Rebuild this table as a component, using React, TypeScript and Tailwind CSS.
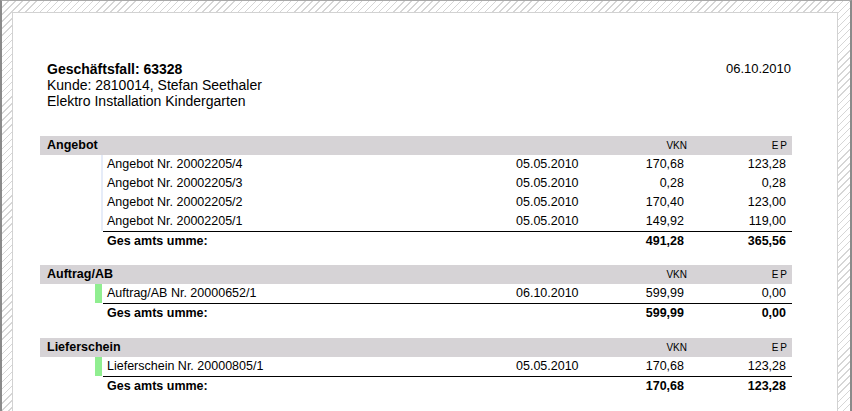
import React from 'react';

interface DocRow {
  label: string;
  date: string;
  vkn: string;
  ep: string;
}

interface Section {
  title: string;
  marker: 'blue' | 'green';
  rows: DocRow[];
  totalVkn: string;
  totalEp: string;
}

const sections: Section[] = [
  {
    title: 'Angebot',
    marker: 'blue',
    rows: [
      { label: 'Angebot Nr. 20002205/4', date: '05.05.2010', vkn: '170,68', ep: '123,28' },
      { label: 'Angebot Nr. 20002205/3', date: '05.05.2010', vkn: '0,28', ep: '0,28' },
      { label: 'Angebot Nr. 20002205/2', date: '05.05.2010', vkn: '170,40', ep: '123,00' },
      { label: 'Angebot Nr. 20002205/1', date: '05.05.2010', vkn: '149,92', ep: '119,00' },
    ],
    totalVkn: '491,28',
    totalEp: '365,56',
  },
  {
    title: 'Auftrag/AB',
    marker: 'green',
    rows: [{ label: 'Auftrag/AB Nr. 20000652/1', date: '06.10.2010', vkn: '599,99', ep: '0,00' }],
    totalVkn: '599,99',
    totalEp: '0,00',
  },
  {
    title: 'Lieferschein',
    marker: 'green',
    rows: [{ label: 'Lieferschein Nr. 20000805/1', date: '05.05.2010', vkn: '170,68', ep: '123,28' }],
    totalVkn: '170,68',
    totalEp: '123,28',
  },
];

const SectionBlock: React.FC<{ section: Section; first: boolean }> = ({ section, first }) => {
  return (
    <div className={first ? 'mb-[14px]' : 'mb-[15px]'}>
      {/* grey header band */}
      <div className="flex h-[19px] items-center bg-[#d6d3d6] pl-[7px] pr-[5px]">
        <div className="flex flex-1 items-center justify-between">
          <span className="text-[12.5px] font-bold">{section.title}</span>
          <span className="text-[10px]">VKN</span>
        </div>
        <span className="w-[102px] text-right text-[10px] tracking-[2px] mr-[-2px]">EP</span>
      </div>

      {section.rows.map((row) => (
        <div key={row.label} className="ml-[55px] flex h-[19px]">
          <div className="flex w-[8px]">
            {section.marker === 'green' ? (
              <div className="w-[7px] bg-[#90ee90]" />
            ) : (
              <div className="ml-[6px] w-[2px] bg-[#e6ecf8]" />
            )}
          </div>
          <div className="flex flex-1 items-center pl-[4px] pr-[5px] text-[12.5px]">
            <span className="w-[409px]">{row.label}</span>
            <span className="w-[90px]">{row.date}</span>
            <span className="w-[78px] text-right">{row.vkn}</span>
            <span className="w-[102px] text-right">{row.ep}</span>
          </div>
        </div>
      ))}

      <div className="ml-[63px] flex h-[20px] items-center border-t border-black pl-[4px] pr-[5px] text-[12.5px] font-bold">
        <span className="w-[409px]">Ges amts umme:</span>
        <span className="w-[90px]" />
        <span className="w-[78px] text-right">{section.totalVkn}</span>
        <span className="w-[102px] text-right">{section.totalEp}</span>
      </div>
    </div>
  );
};

const App: React.FC = () => {
  return (
    <div className="h-[411px] w-[852px] overflow-hidden border-l-2 border-r-2 border-t border-l-[#8a8a8a] border-r-[#8a8a8a] border-t-[#a8a8a8] bg-[repeating-linear-gradient(135deg,#ffffff_0px,#ffffff_4px,#d6d6d6_4px,#d6d6d6_5px)] pl-[10px] pr-[12px] pt-[11px] font-['Liberation_Sans',Arial,sans-serif] text-black">
      <div className="h-[520px] border border-[#d2d2d2] bg-white pl-[27px] pr-[45px] pt-[48px]">
        <div className="mb-[27px] flex justify-between pl-[7px] pr-[1px] text-[14px] leading-[16px]">
          <div>
            <p className="font-bold">Geschäftsfall: 63328</p>
            <p>Kunde: 2810014, Stefan Seethaler</p>
            <p>Elektro Installation Kindergarten</p>
          </div>
          <p className="text-[13px] leading-[15px]">06.10.2010</p>
        </div>

        {sections.map((s, i) => (
          <SectionBlock key={s.title} section={s} first={i === 0} />
        ))}
      </div>
    </div>
  );
};

export default App;
